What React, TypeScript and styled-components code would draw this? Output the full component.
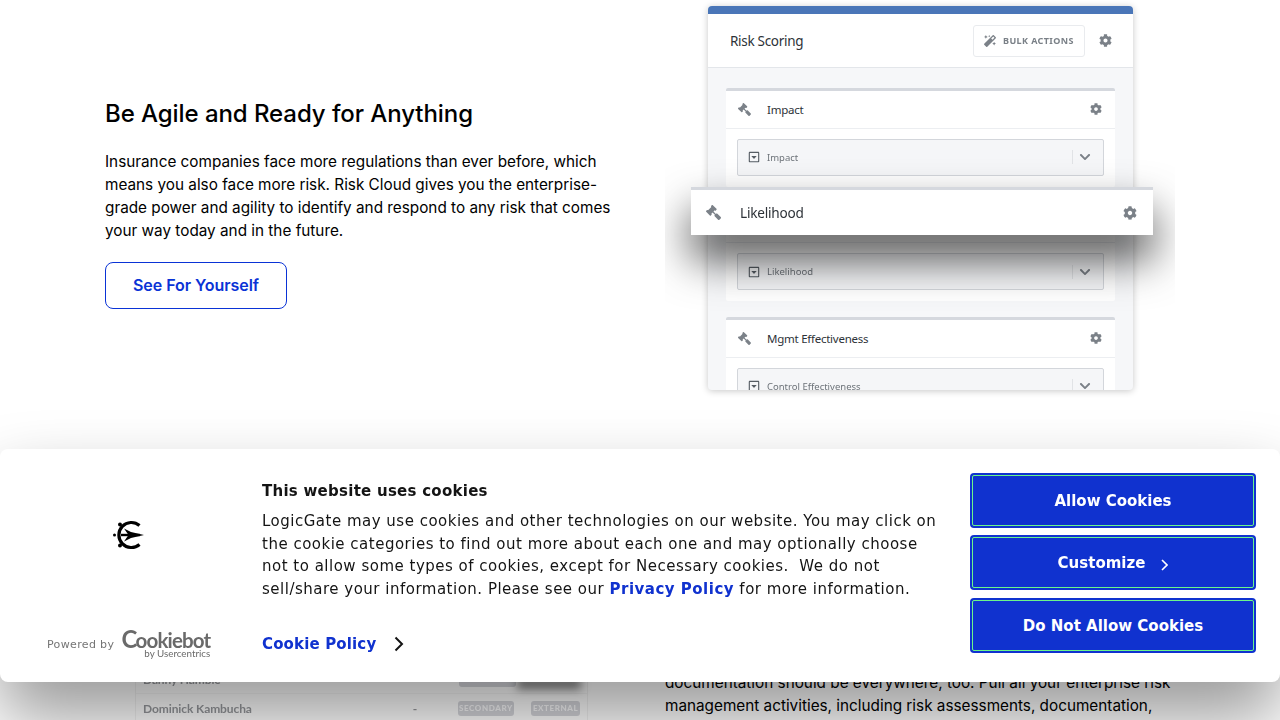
import React from "react";
import styled, { createGlobalStyle } from "styled-components";
import { FaCog, FaGavel, FaMagic, FaRegCaretSquareDown, FaChevronDown } from "react-icons/fa";

const Global = createGlobalStyle`
  html, body { margin: 0; padding: 0; background: #fff; overflow: hidden; }
  * { box-sizing: border-box; }
`;

const Page = styled.div`
  position: relative;
  width: 1280px;
  height: 720px;
  overflow: hidden;
  background: #fff;
  font-family: Inter, "Liberation Sans", sans-serif;
  color: #000;
`;

const Row = styled.section<{ $height: number }>`
  display: grid;
  grid-template-columns: 510px 510px;
  column-gap: 50px;
  padding: 0 105px;
  height: ${(p) => p.$height}px;
`;

const HeroCopy = styled.div`
  padding-top: 99px;
`;

const Heading = styled.h2`
  margin: 0 0 21px;
  font-size: 24px;
  line-height: 30px;
  font-weight: 450;
  letter-spacing: -0.07px;
`;

const Para = styled.p`
  margin: 0;
  font-size: 15.3px;
  line-height: 23px;
  font-weight: 400;
`;

const Outline = styled.a`
  display: inline-flex;
  align-items: center;
  justify-content: center;
  margin-top: 20px;
  width: 182px;
  height: 47px;
  border: 1px solid #0a33d6;
  border-radius: 8px;
  color: #0a33d6;
  font-size: 16px;
  font-weight: 600;
  letter-spacing: -0.05px;
  padding-bottom: 2px;
`;

const Shot = styled.div`
  position: relative;
  height: 420px;
  padding: 6px 0 0 43px;
  overflow: hidden;
`;

const Card = styled.div`
  width: 425px;
  height: 384px;
  background: #f6f7f9;
  border-radius: 4px;
  overflow: hidden;
  box-shadow: 0 1px 7px rgba(0, 0, 0, 0.22);
  font-family: "Noto Sans", "Open Sans", sans-serif;
  filter: blur(0.55px);
`;

const BlueBar = styled.div`
  height: 8px;
  background: #4a76b8;
`;

const CardHead = styled.div`
  display: flex;
  align-items: center;
  height: 54px;
  padding: 0 21px 0 22px;
  background: #fff;
  border-bottom: 1px solid #e3e6ea;
  color: #2d3238;
  font-size: 13.5px;
`;

const CardTitle = styled.span`
  flex: 1;
  letter-spacing: -0.3px;
`;

const Bulk = styled.div`
  display: flex;
  align-items: center;
  gap: 7px;
  width: 112px;
  height: 32px;
  margin-right: 14px;
  padding-left: 10px;
  border: 1px solid #e9ebee;
  border-radius: 3px;
  color: #7a8087;
  font-size: 9px;
  font-weight: 700;
  letter-spacing: 0.4px;
  white-space: nowrap;
  svg { flex: none; }
`;

const Gray = styled.span<{ $c?: string; $flip?: boolean }>`
  display: inline-flex;
  color: ${(p) => p.$c || "#7b8188"};
  transform: ${(p) => (p.$flip ? "scaleX(-1)" : "none")};
`;

const CardBody = styled.div`
  display: flex;
  flex-direction: column;
  gap: 16px;
  padding: 20px 18px;
`;

const Block = styled.div`
  flex: none;
  height: 98.6px;
  background: #fff;
  border-top: 3px solid #d5d8de;
  border-radius: 2px;
`;

const BlockHead = styled.div`
  display: flex;
  align-items: center;
  height: 37.6px;
  padding: 0 13px 0 12px;
  border-bottom: 1px solid #eceef1;
  color: #2d3238;
  font-size: 11.5px;
  letter-spacing: -0.25px;
`;

const BlockName = styled.span`
  flex: 1;
  margin-left: 16px;
`;

const SelectWrap = styled.div`
  padding: 10px 11px;
`;

const Select = styled.div`
  display: flex;
  align-items: center;
  height: 37px;
  padding: 0 12px 0 10px;
  background: #f5f6f8;
  border: 1px solid #d3d6db;
  border-radius: 2px;
  color: #6d7379;
  font-size: 9.5px;
`;

const SelectLabel = styled.span`
  flex: 1;
  margin-left: 7px;
`;

const Sep = styled.span`
  width: 1px;
  height: 14px;
  margin-right: 6px;
  background: #e1e3e6;
`;

const Floating = styled.div`
  position: absolute;
  top: 187px;
  left: 26px;
  display: flex;
  align-items: center;
  width: 462px;
  height: 48px;
  padding: 0 16px 0 15px;
  background: #fff;
  border-top: 3px solid #d5d8de;
  box-shadow: 0 24px 44px rgba(0, 0, 0, 0.7);
  color: #2d3238;
  font-family: "Noto Sans", "Open Sans", sans-serif;
  font-size: 13.6px;
  letter-spacing: -0.2px;
`;

const FloatName = styled.span`
  flex: 1;
  margin-left: 19px;
`;

const TableCol = styled.div`
  padding: 245px 0 0 30px;
`;

const TableCard = styled.div`
  position: relative;
  width: 453px;
  border-left: 1px solid #f2f2f2;
  border-right: 1px solid #f2f2f2;
  background: #fff;
  font-family: Lato, "Liberation Sans", sans-serif;
  font-size: 12px;
  font-weight: 700;
  color: #97999d;
  filter: blur(0.45px);
`;

const TableRow = styled.div`
  display: flex;
  align-items: center;
  height: 29px;
  padding: 0 7px;
  border-bottom: 1px solid #f6f6f6;
  letter-spacing: -0.1px;
`;

const Person = styled.span`
  width: 271px;
`;

const Dash = styled.span`
  width: 45px;
`;

const Tag = styled.span<{ $w: number }>`
  display: inline-flex;
  align-items: center;
  justify-content: center;
  width: ${(p) => p.$w}px;
  height: 15px;
  margin-right: 17px;
  border-radius: 3px;
  background: #d6d7dc;
  color: #fbfbfd;
  font-size: 8px;
  font-weight: 900;
  letter-spacing: 0.6px;
  &:last-child { margin-right: 0; }
`;

const DragShadow = styled.div`
  position: absolute;
  top: 13px;
  right: 6px;
  width: 64px;
  height: 11px;
  background: rgba(0, 0, 0, 0.5);
  filter: blur(5px);
`;

const FlowCopy = styled.div`
  padding-top: 250.5px;
`;

const Banner = styled.div`
  position: absolute;
  left: 0;
  right: 0;
  top: 449px;
  height: 233px;
  display: flex;
  padding-right: 24px;
  background: #fff;
  border-radius: 8px;
  box-shadow: 0 36px 68px rgba(0, 0, 0, 0.4);
  font-family: "DejaVu Sans", sans-serif;
  color: #141414;
  font-size: 15px;
`;

const BrandCol = styled.div`
  flex: none;
  width: 262px;
  display: flex;
  flex-direction: column;
  padding: 70px 0 0 47px;
`;

const Mark = styled.svg`
  display: block;
  margin-left: 66px;
`;

const PoweredRow = styled.div`
  display: flex;
  align-items: center;
  margin-top: 79px;
`;

const Powered = styled.span`
  margin: 1px 8px 0 0;
  color: #757575;
  font-size: 11px;
  letter-spacing: 0.35px;
`;

const Wordmark = styled.div`
  display: flex;
  flex-direction: column;
  align-items: flex-end;
  width: 88px;
  color: #6a6a6a;
  font-family: Lato, "Liberation Sans", sans-serif;
`;

const WordTop = styled.span`
  font-size: 20.5px;
  line-height: 18px;
  font-weight: 700;
  letter-spacing: -0.85px;
  white-space: nowrap;
`;

const BigC = styled.span`
  font-size: 24px;
  letter-spacing: -1.8px;
`;

const WordSub = styled.span`
  margin-top: -1px;
  font-size: 9.8px;
  line-height: 10px;
  white-space: nowrap;
`;

const TextCol = styled.div`
  flex: none;
  width: 708px;
  padding-top: 31px;
  padding-right: 28px;
`;

const Title = styled.div`
  margin-bottom: 8px;
  font-weight: 700;
  line-height: 22px;
  letter-spacing: 0.26px;
`;

const Body = styled.div`
  line-height: 22.6px;
  letter-spacing: 0.5px;
  white-space: pre-wrap;
`;

const BlueLink = styled.a`
  color: #1032cf;
  font-weight: 700;
`;

const PolicyRow = styled.div`
  display: flex;
  align-items: center;
  margin-top: 33px;
  height: 22px;
  letter-spacing: 0.15px;
`;

const Chevron = styled.svg<{ $ml?: number; $mt?: number }>`
  display: block;
  flex: none;
  margin-left: ${(p) => p.$ml || 0}px;
  margin-top: ${(p) => p.$mt || 0}px;
`;

const Buttons = styled.div`
  flex: none;
  width: 286px;
  display: flex;
  flex-direction: column;
  gap: 7.9px;
  padding-top: 24px;
`;

const CookieBtn = styled.div`
  display: flex;
  align-items: center;
  justify-content: center;
  gap: 16px;
  height: 54.6px;
  padding-top: 1px;
  background: #1032cf;
  border-radius: 4px;
  outline: 1px solid #6cf58a;
  outline-offset: -3px;
  color: #fff;
  font-weight: 700;
`;

const Sectioned = ({ name, field }: { name: string; field: string }) => (
  <Block>
    <BlockHead>
      <Gray $flip><FaGavel size={13} /></Gray>
      <BlockName>{name}</BlockName>
      <Gray><FaCog size={12} /></Gray>
    </BlockHead>
    <SelectWrap>
      <Select>
        <Gray $c="#565d64"><FaRegCaretSquareDown size={12} /></Gray>
        <SelectLabel>{field}</SelectLabel>
        <Sep />
        <Gray><FaChevronDown size={12} /></Gray>
      </Select>
    </SelectWrap>
  </Block>
);

export default function App() {
  return (
    <Page>
      <Global />
      <Row $height={420}>
        <HeroCopy>
          <Heading>Be Agile and Ready for Anything</Heading>
          <Para>
            Insurance companies face more regulations than ever before, which means you also face more risk. Risk Cloud
            gives you the enterprise-grade power and agility to identify and respond to any risk that comes your way
            today and in the future.
          </Para>
          <Outline>See For Yourself</Outline>
        </HeroCopy>
        <Shot>
          <Card>
            <BlueBar />
            <CardHead>
              <CardTitle>Risk Scoring</CardTitle>
              <Bulk>
                <Gray><FaMagic size={12} /></Gray>
                BULK ACTIONS
              </Bulk>
              <Gray><FaCog size={13} /></Gray>
            </CardHead>
            <CardBody>
              <Sectioned name="Impact" field="Impact" />
              <Sectioned name="Likelihood" field="Likelihood" />
              <Sectioned name="Mgmt Effectiveness" field="Control Effectiveness" />
            </CardBody>
          </Card>
          <Floating>
            <Gray $flip><FaGavel size={15} /></Gray>
            <FloatName>Likelihood</FloatName>
            <Gray><FaCog size={14} /></Gray>
          </Floating>
        </Shot>
      </Row>
      <Row $height={300}>
        <TableCol>
          <TableCard>
            <TableRow>
              <Person>Danny Hamble</Person>
              <Dash />
              <Tag $w={57} />
            </TableRow>
            <TableRow>
              <Person>Dominick Kambucha</Person>
              <Dash>-</Dash>
              <Tag $w={57}>SECONDARY</Tag>
              <Tag $w={49}>EXTERNAL</Tag>
            </TableRow>
            <DragShadow />
          </TableCard>
        </TableCol>
        <FlowCopy>
          <Para>
            documentation should be everywhere, too. Pull all your enterprise risk management activities, including
            risk assessments, documentation,
          </Para>
        </FlowCopy>
      </Row>
      <Banner>
        <BrandCol>
          <Mark width="32" height="32" viewBox="0 0 32 32" fill="none" stroke="#000">
            <path d="M26.5 6.5A12.5 12.5 0 1 0 26.5 25.5" strokeWidth="3.2" />
            <path d="M8 16H27" strokeWidth="2.4" />
            <path d="M11 9.5L18 13L31 16L18 19L11 22.5L15.5 16Z" fill="#000" stroke="none" />
            <circle cx="7" cy="5.5" r="2" fill="#000" stroke="none" />
            <circle cx="7" cy="26.5" r="2" fill="#000" stroke="none" />
            <circle cx="1.5" cy="16" r="1.5" fill="#000" stroke="none" />
          </Mark>
          <PoweredRow>
            <Powered>Powered by</Powered>
            <Wordmark>
              <WordTop><BigC>C</BigC>ookiebot</WordTop>
              <WordSub>by Usercentrics</WordSub>
            </Wordmark>
          </PoweredRow>
        </BrandCol>
        <TextCol>
          <Title>This website uses cookies</Title>
          <Body>
            {"LogicGate may use cookies and other technologies on our website. You may click on the cookie categories to find out more about each one and may optionally choose not to allow some types of cookies, except for Necessary cookies.  We do not sell/share your information. Please see our "}
            <BlueLink>Privacy Policy</BlueLink>
            {" for more information."}
          </Body>
          <PolicyRow>
            <BlueLink>Cookie Policy</BlueLink>
            <Chevron $ml={18} width="10" height="16" viewBox="0 0 10 16" fill="none" stroke="#141414" strokeWidth="2">
              <path d="M1.5 1.5L8 8L1.5 14.5" />
            </Chevron>
          </PolicyRow>
        </TextCol>
        <Buttons>
          <CookieBtn>Allow Cookies</CookieBtn>
          <CookieBtn>
            Customize
            <Chevron $mt={3} width="7" height="12" viewBox="0 0 7 12" fill="none" stroke="#fff" strokeWidth="1.6">
              <path d="M1 1L6 6L1 11" />
            </Chevron>
          </CookieBtn>
          <CookieBtn>Do Not Allow Cookies</CookieBtn>
        </Buttons>
      </Banner>
    </Page>
  );
}
